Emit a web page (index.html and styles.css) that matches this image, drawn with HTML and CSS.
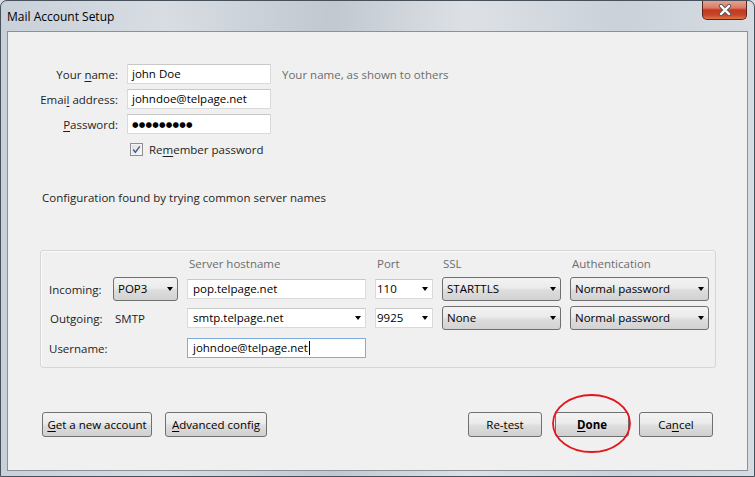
FILE: index.html
```html
<!DOCTYPE html>
<html lang="en">
  <head>
    <meta charset="UTF-8" />
    <meta name="viewport" content="width=device-width, initial-scale=1.0" />
    <title>Mail Account Setup</title>

    <!-- Styles -->
    <link rel="stylesheet" href="styles.css">
  </head>
  <body>
    <div class="window">
      <!-- Title Bar -->
      <div class="titlebar">
        <span class="title">Mail Account Setup</span>
        <div class="close-btn">
          <svg width="14" height="12" viewBox="0 0 14 12">
            <path d="M3 2 L11 10 M11 2 L3 10" stroke="#5b5b5b" stroke-width="4.2" stroke-linecap="round" fill="none" />
            <path d="M3 2 L11 10 M11 2 L3 10" stroke="#ffffff" stroke-width="2.4" stroke-linecap="round" fill="none" />
          </svg>
        </div>
      </div>

      <div class="panel">
        <!-- Identity Form -->
        <div class="identity">
          <label>Your <u>n</u>ame:</label>
          <div class="field">john Doe</div>
          <span class="hint">Your name, as shown to others</span>

          <label>Emai<u>l</u> address:</label>
          <div class="field">johndoe@telpage.net</div>

          <label><u>P</u>assword:</label>
          <div class="field"><span class="dots">●●●●●●●●●</span></div>
        </div>

        <div class="remember">
          <span class="checkbox">
            <svg width="9" height="9" viewBox="0 0 9 9">
              <path d="M1.2 4.6 L3.4 7.2 L7.8 1.4" stroke="#4a5f9a" stroke-width="1.5" fill="none" />
            </svg>
          </span>
          <span>Re<u>m</u>ember password</span>
        </div>

        <p class="status">Configuration found by trying common server names</p>

        <!-- Server Settings -->
        <div class="server-box">
          <div class="server-grid">
            <span></span>
            <span></span>
            <span class="col-head">Server hostname</span>
            <span class="col-head">Port</span>
            <span class="col-head ssl-head">SSL</span>
            <span class="col-head">Authentication</span>

            <span class="row-label">Incoming:</span>
            <div class="dropdown">POP3</div>
            <div class="field host">pop.telpage.net</div>
            <div class="field combo port">110</div>
            <div class="dropdown">STARTTLS</div>
            <div class="dropdown">Normal password</div>

            <span class="row-label outgoing">Outgoing:</span>
            <span class="type-text">SMTP</span>
            <div class="field combo host">smtp.telpage.net</div>
            <div class="field combo port">9925</div>
            <div class="dropdown">None</div>
            <div class="dropdown">Normal password</div>

            <span class="row-label">Username:</span>
            <span></span>
            <div class="field host focused">johndoe@telpage.net<span class="caret"></span></div>
          </div>
        </div>

        <!-- Buttons -->
        <div class="actions">
          <div class="actions-group">
            <button class="btn btn-new"><u>G</u>et a new account</button>
            <button class="btn btn-advanced"><u>A</u>dvanced config</button>
          </div>
          <div class="actions-group">
            <button class="btn btn-retest">Re-<u>t</u>est</button>
            <button class="btn btn-done"><u>D</u>one</button>
            <button class="btn btn-cancel">Ca<u>n</u>cel</button>
          </div>
        </div>

        <!-- Highlight around Done -->
        <svg class="highlight" width="82" height="62" viewBox="0 0 82 62">
          <ellipse cx="40.5" cy="30.5" rx="38.5" ry="28.5" fill="none" stroke="#e3161b" stroke-width="1.8" />
        </svg>
      </div>
    </div>
  </body>
</html>
```

FILE: styles.css
```css
/* General Styles */
* {
  box-sizing: border-box;
}

body {
  margin: 0;
  font-family: "Open Sans", "Noto Sans", sans-serif;
  font-size: 11.5px;
  color: #1e1e1e;
  background: #d6dbe1;
}

u {
  text-decoration-thickness: 1px;
  text-underline-offset: 2px;
}

/* Window Frame */
.window {
  width: 755px;
  height: 477px;
  border: 1px solid #47515c;
  border-radius: 7px 7px 0 0;
  background: linear-gradient(90deg, #c8d0d9 0%, #d8dde3 22%, #c1c8d0 44%, #dde1e6 62%, #cad1d9 82%, #d7dce2 100%);
  overflow: hidden;
}

.titlebar {
  display: flex;
  align-items: flex-start;
  height: 30px;
}

.title {
  padding: 7px 0 0 6px;
  font-size: 12px;
  color: #000;
}

.close-btn {
  display: flex;
  align-items: center;
  justify-content: center;
  width: 45px;
  height: 20px;
  margin: -1px 7px 0 auto;
  border: 1px solid #5c2519;
  border-top: none;
  border-radius: 0 0 5px 5px;
  background: linear-gradient(#e9a797 0%, #db7a63 42%, #c23a1f 52%, #c54528 78%, #dd7548 100%);
}

/* Content Panel */
.panel {
  position: relative;
  height: 440px;
  margin: 0 6px;
  padding: 32px 34px 0 0;
  border: 1px solid #8b9197;
  background: #f0f0f0;
}

/* Identity Form */
.identity {
  display: grid;
  grid-template-columns: 110px 144px auto;
  grid-auto-rows: 20px;
  column-gap: 9px;
  row-gap: 5px;
  align-items: center;
}

.identity label {
  grid-column: 1;
  justify-self: end;
}

.hint {
  margin-left: 2px;
  color: #6d6d6d;
}

.field {
  position: relative;
  height: 20px;
  padding: 0 4px;
  border: 1px solid #dadada;
  border-top-color: #c8c8c8;
  background: #fff;
  color: #000;
  line-height: 18px;
  white-space: nowrap;
}

.dots {
  font-family: "DejaVu Sans", sans-serif;
  font-size: 7.5px;
  letter-spacing: 0.2px;
  vertical-align: 1px;
}

.remember {
  display: flex;
  align-items: center;
  gap: 6px;
  height: 13px;
  margin: 9px 0 0 122px;
}

.checkbox {
  display: flex;
  align-items: center;
  justify-content: center;
  width: 13px;
  height: 13px;
  border: 1px solid #8e8f8f;
  background: linear-gradient(135deg, #dcdcdc, #fbfbfb);
  box-shadow: inset 0 0 0 1px #f4f4f4;
}

.status {
  margin: 34px 0 0 34px;
  line-height: 16px;
}

/* Server Settings */
.server-box {
  width: 676px;
  margin: 44px 0 0 32px;
  padding: 3px 6px 6px 8px;
  border: 1px solid #d6d6d6;
  border-radius: 3px;
  box-shadow: inset 1px 1px 0 #fafafa;
}

.server-grid {
  display: grid;
  grid-template-columns: 55px 65px 179px 58px 119px 139px;
  grid-template-rows: 18px 24px 24px 26px;
  column-gap: 9px;
  row-gap: 5px;
  align-items: center;
}

.col-head {
  padding-left: 2px;
  color: #6d6d6d;
}

.ssl-head {
  padding-left: 1px;
}

.row-label.outgoing {
  padding-left: 1px;
}

.type-text {
  padding-left: 2px;
}

.host {
  padding-left: 5px;
}

.port {
  padding-left: 1px;
}

.focused {
  border-color: #7eacde;
}

.caret {
  display: inline-block;
  width: 1px;
  height: 14px;
  margin-left: 1px;
  background: #000;
  vertical-align: -3px;
}

.dropdown {
  position: relative;
  height: 24px;
  padding: 0 20px 0 4px;
  border: 1px solid #707070;
  border-radius: 3px;
  background: linear-gradient(#f3f3f3, #ebebeb 45%, #dddddd 55%, #d2d2d2);
  color: #000;
  line-height: 22px;
  white-space: nowrap;
}

.dropdown::after,
.combo::after {
  content: "";
  position: absolute;
  top: 50%;
  right: 4px;
  margin-top: -2px;
  border-top: 4px solid #000;
  border-left: 3.5px solid transparent;
  border-right: 3.5px solid transparent;
}

/* Button Styles */
.actions {
  display: flex;
  justify-content: space-between;
  margin: 44px 0 0 34px;
}

.actions-group {
  display: flex;
  gap: 13px;
}

.btn {
  height: 25px;
  padding: 0;
  border: 1px solid #707070;
  border-radius: 3px;
  background: linear-gradient(#f3f3f3, #ebebeb 45%, #dddddd 55%, #d0d0d0);
  font-family: inherit;
  font-size: 11.5px;
  color: #000;
}

.btn-new {
  width: 110px;
}

.btn-advanced {
  width: 102px;
}

.btn-retest,
.btn-done,
.btn-cancel {
  width: 74px;
}

.btn-cancel {
  margin-left: -3px;
}

.btn-done {
  font-weight: bold;
}

.highlight {
  position: absolute;
  left: 543px;
  top: 361px;
}
```
